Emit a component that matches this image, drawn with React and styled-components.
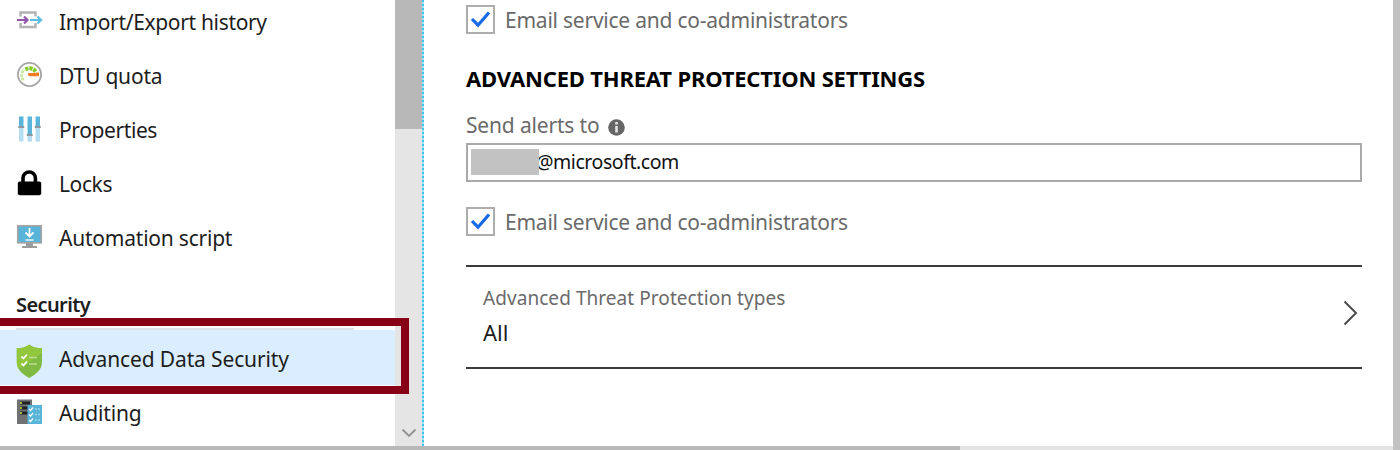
import React from "react";
import styled, { createGlobalStyle } from "styled-components";

const Global = createGlobalStyle`
  * { box-sizing: border-box; }
  body { margin: 0; background: #fff; overflow: hidden; font-family: "Noto Sans", "Open Sans", sans-serif; }
`;

const Page = styled.div`
  display: flex;
  flex-direction: column;
  width: 1400px;
  height: 450px;
  overflow: hidden;
`;
const Columns = styled.div`
  display: flex;
  height: 446px;
`;
const Sidebar = styled.nav`
  position: relative;
  display: flex;
  width: 424px;
  height: 446px;
`;
const Menu = styled.div`
  width: 395px;
  height: 446px;
  overflow: hidden;
`;
const MenuList = styled.div`
  margin-top: -6px;
`;
const MenuItem = styled.div`
  display: flex;
  align-items: center;
  gap: 16px;
  height: ${(p) => (p.$active ? 55 : 54)}px;
  padding-left: 16px;
  background: ${(p) => (p.$active ? "#dbeeff" : "transparent")};
  svg { flex: none; margin-top: ${(p) => (p.$active ? 8 : 0)}px; }
  span { margin-top: 2px; }
`;
const Label = styled.span`
  font-size: ${(p) => p.$size || 21}px;
  line-height: 28px;
  font-weight: ${(p) => p.$weight || 400};
  color: ${(p) => p.$color || "#1d1d1d"};
  letter-spacing: ${(p) => p.$track || 0}px;
  white-space: nowrap;
`;
const SectionTitle = styled.div`
  height: 66px;
  margin: 0 41px 0 16px;
  padding-top: 27px;
  border-bottom: 2px solid #dde3e8;
  line-height: 28px;
`;
const ScrollTrack = styled.div`
  display: flex;
  flex-direction: column;
  justify-content: space-between;
  align-items: center;
  width: 27px;
  background: #e5e5e5;
`;
const ScrollThumb = styled.div`
  width: 27px;
  height: 129px;
  background: #b8b8b8;
`;
const DottedEdge = styled.div`
  width: 2px;
  background: repeating-linear-gradient(#3fc4ea 0 2px, #a5e2f3 2px 4px);
`;
const Highlight = styled.div`
  position: absolute;
  left: -8px;
  top: 318px;
  width: 417px;
  height: 76px;
  border: 8px solid #870016;
`;
const Content = styled.main`
  flex: 1;
  padding: 5px 31px 0 42px;
`;
const CheckRow = styled.div`
  display: flex;
  align-items: center;
  gap: 10px;
  height: 29px;
`;
const CheckBox = styled.span`
  display: flex;
  align-items: center;
  justify-content: center;
  width: 29px;
  height: 29px;
  border: 2px solid #adadad;
`;
const Heading = styled.h2`
  display: flex;
  height: 28px;
  margin: 30px 0 19px;
`;
const FieldLabel = styled.div`
  display: flex;
  align-items: center;
  gap: 9px;
  height: 28px;
  svg { margin-top: 5px; }
`;
const Input = styled.div`
  display: flex;
  align-items: center;
  height: 39px;
  margin: 4px 0 25px;
  padding: 0 0 1px 3px;
  border: 2px solid #a9a9a9;
`;
const InputText = styled.div`
  display: flex;
  align-items: center;
  height: 26px;
  margin-left: -3px;
`;
const Redaction = styled.span`
  position: relative;
  z-index: 1;
  width: 68px;
  height: 26px;
  background: #c2c2c2;
`;
const TypesRow = styled.div`
  display: flex;
  align-items: center;
  justify-content: space-between;
  height: 104px;
  margin-top: 29px;
  padding: 0 4px 8px 17px;
  border: solid #3a3a3a;
  border-width: 2px 0;
`;
const TypesText = styled.div`
  display: flex;
  flex-direction: column;
  gap: 6px;
  margin-top: 3px;
`;
const RightEdge = styled.div`
  width: 7px;
  background: #c2c2c2;
`;
const BottomBar = styled.div`
  width: 1393px;
  height: 4px;
  background: #e4e4e4;
`;
const BottomRow = styled.div`
  display: flex;
  height: 4px;
`;
const BottomThumb = styled.div`
  width: 960px;
  height: 4px;
  background: #b8b8b8;
`;

const Icon = ({ h = 26, children }) => (
  <svg width="27" height={h} viewBox={`0 0 27 ${h}`} fill="none">{children}</svg>
);
const TransferIcon = () => (
  <Icon>
    <path d="M4.500 8.500V4.500H19.500V8.500M4.500 15V19H19.500V15" stroke="#b2b2b2" strokeWidth="2.400" />
    <path d="M1 12H11M8 8.500L11.500 12L8 15.500" stroke="#9356ad" strokeWidth="2.200" />
    <path d="M14 12H24.500M21.500 8.500L25 12L21.500 15.500" stroke="#5dbce2" strokeWidth="2.200" />
  </Icon>
);
const GaugeIcon = () => (
  <Icon>
    <circle cx="13.500" cy="12.500" r="11.600" stroke="#a7a7a7" strokeWidth="1.900" />
    <path d="M7.500 18A7.200 7.200 0 0 1 8.500 7.500" stroke="#c3e69a" strokeWidth="2.800" strokeDasharray="2.600 1" />
    <path d="M9.500 7.500A7.500 7.500 0 0 1 20 10" stroke="#83cc28" strokeWidth="4" strokeDasharray="3.200 .8" />
    <path d="M12 11.300L23 10.500V14.200H13Q11.500 13 12 11.300Z" fill="#f37b22" />
  </Icon>
);
const SlidersIcon = () => (
  <Icon>
    {[[3, 11], [11.500, 19], [19.500, 11]].map(([x, y]) => (
      <g key={x}>
        <path d={`M${x} .5H${x + 4.5}V${y}H${x}Z`} fill="#5bb4da" />
        <path d={`M${x} ${y}H${x + 4.5}V25.500H${x}Z`} fill="#b5def0" />
        <path d={`M${x - 0.7} ${y}H${x + 5.2}`} stroke="#8f989d" strokeWidth="2" />
      </g>
    ))}
  </Icon>
);
const LockIcon = () => (
  <Icon>
    <path d="M7 12V8A6.200 6 0 0 1 19.400 8V12" stroke="#000" strokeWidth="3.600" />
    <rect x="1.800" y="11.500" width="23.400" height="13.800" rx="2" fill="#000" />
  </Icon>
);
const MonitorIcon = () => (
  <Icon>
    <path d="M10 19H17V22H21V24H6V22H10Z" fill="#9c9c9c" />
    <rect x="1.800" y="1.800" width="23.400" height="17" fill="#58b4d9" stroke="#a4a4a4" strokeWidth="1.700" />
    <path d="M13.500 4V12M9.500 8.500L13.500 12.500L17.500 8.500" stroke="#fff" strokeWidth="1.800" />
    <path d="M9.500 16H17.500" stroke="#c8e6f3" strokeWidth="2" />
  </Icon>
);
const ShieldIcon = () => (
  <Icon h={35}>
    <path d="M13.300 .5C17 3.500 20.500 4 26 4V18C26 26 20 30 13.300 34C6.500 30 .8 26 .8 18V4C6 4 9.500 3.500 13.300 .5Z" fill="#7fba42" />
    <path d="M13.300 .5C17 3.500 20.500 4 26 4V9L3 25C1.500 23 .8 21 .8 18V4C6 4 9.500 3.500 13.300 .5Z" fill="#91c63d" />
    <path d="M5.500 12.500L7.500 14.500L11 10.500M5.500 19.500L7.500 21.500L11 17.500" stroke="#fff" strokeWidth="1.800" />
    <path d="M13 13.500H21M13 20H21" stroke="#bddc91" strokeWidth="1.700" />
  </Icon>
);
const AuditIcon = () => (
  <Icon>
    <rect x="1" y=".5" width="15" height="24.500" fill="#6f7173" />
    <path d="M4 4H14M4 9H14M4 14H14" stroke="#202326" strokeWidth="3.200" />
    <path d="M4 4H6M4 9H6M4 14H6" stroke="#a1bd25" strokeWidth="2" />
    <rect x="11.500" y="6" width="14.500" height="19" fill="#58b4d9" />
    <path d="M13 10L14.500 11.500L17 8.500M13 15.500L14.500 17L17 14M13 21L14.500 22.500L17 19.500" stroke="#fff" strokeWidth="1.300" />
    <path d="M19 10H24M19 15.500H24M19 21H24" stroke="#9ad5ec" strokeWidth="1.300" strokeDasharray="2 1" />
  </Icon>
);
const CheckMark = () => (
  <svg width="21" height="19" viewBox="0 0 21 19" fill="none">
    <path d="M2 9L8 15.200L19 2.500" stroke="#1668e8" strokeWidth="3.200" />
  </svg>
);

const settings = [
  ["Import/Export history", TransferIcon, -0.33],
  ["DTU quota", GaugeIcon, -0.2],
  ["Properties", SlidersIcon, -0.4],
  ["Locks", LockIcon, -0.4],
  ["Automation script", MonitorIcon, -0.22],
];

const EmailOption = () => (
  <CheckRow>
    <CheckBox><CheckMark /></CheckBox>
    <Label $color="#6a6a6a" $track={-0.23}>Email service and co-administrators</Label>
  </CheckRow>
);

export default function App() {
  return (
    <Page>
      <Global />
      <Columns>
        <Sidebar>
          <Menu>
            <MenuList>
              {settings.map(([name, Glyph, track]) => (
                <MenuItem key={name}><Glyph /><Label $track={track}>{name}</Label></MenuItem>
              ))}
              <SectionTitle><Label $weight={600} $size={20} $track={-0.6}>Security</Label></SectionTitle>
              <MenuItem $active><ShieldIcon /><Label $track={-0.14}>Advanced Data Security</Label></MenuItem>
              <MenuItem><AuditIcon /><Label $track={-0.12}>Auditing</Label></MenuItem>
            </MenuList>
          </Menu>
          <ScrollTrack>
            <ScrollThumb />
            <svg width="16" height="26" viewBox="0 0 16 26" fill="none">
              <path d="M1.500 9.500L8 16L14.500 9.500" stroke="#929292" strokeWidth="1.800" />
            </svg>
          </ScrollTrack>
          <DottedEdge />
          <Highlight />
        </Sidebar>
        <Content>
          <EmailOption />
          <Heading><Label $weight={700} $color="#000" $size={22} $track={-0.18}>ADVANCED THREAT PROTECTION SETTINGS</Label></Heading>
          <FieldLabel>
            <Label $color="#6a6a6a" $track={-0.17}>Send alerts to</Label>
            <svg width="17" height="17" viewBox="0 0 17 17" fill="none">
              <circle cx="8.500" cy="8.500" r="8.300" fill="#666" />
              <path d="M8.500 3V5.500M8.500 7V13.500" stroke="#e5e5e5" strokeWidth="2.600" />
            </svg>
          </FieldLabel>
          <Input>
            <Redaction />
            <InputText><Label $size={19.500} $color="#111" $track={-0.45}>@microsoft.com</Label></InputText>
          </Input>
          <EmailOption />
          <TypesRow>
            <TypesText>
              <Label $size={19} $color="#6a6a6a" $track={0.06}>Advanced Threat Protection types</Label>
              <Label $size={22}>All</Label>
            </TypesText>
            <svg width="15" height="26" viewBox="0 0 15 26" fill="none">
              <path d="M1.500 1.500L13 13L1.500 24.500" stroke="#484848" strokeWidth="1.900" />
            </svg>
          </TypesRow>
        </Content>
        <RightEdge />
      </Columns>
      <BottomRow>
        <BottomBar><BottomThumb /></BottomBar>
        <RightEdge />
      </BottomRow>
    </Page>
  );
}
